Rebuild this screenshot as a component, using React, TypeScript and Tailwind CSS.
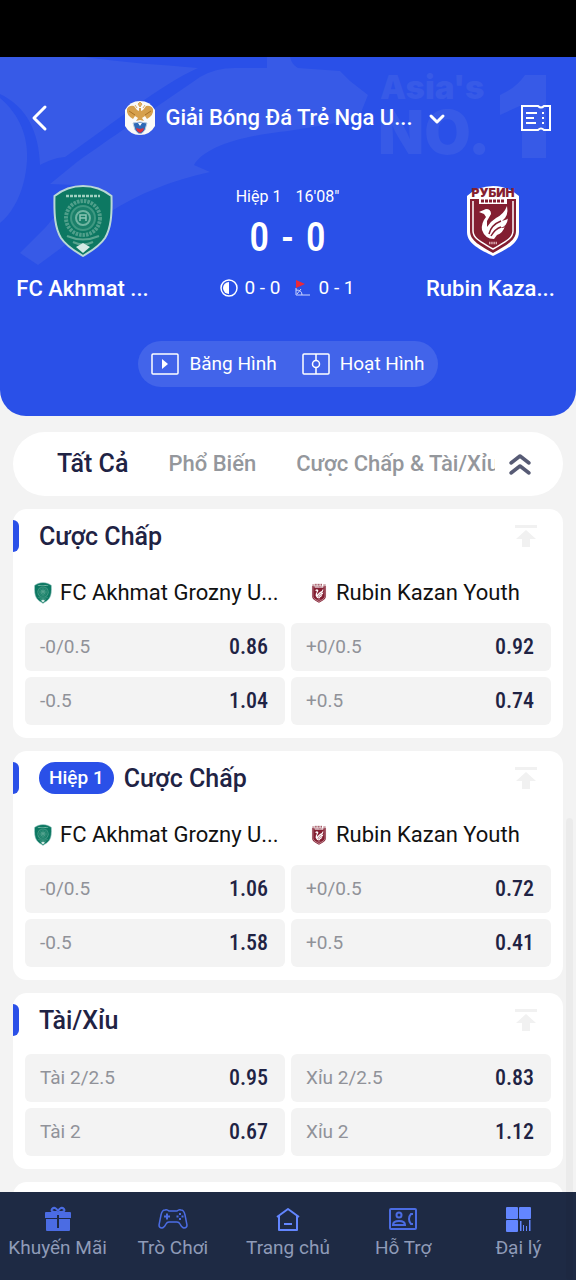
import { useState } from "react";

type Cell = { label: string; odds: string };
type Market = { id: string; title: string; period?: string; teams?: boolean; cells: Cell[] };

const markets: Market[] = [
  {
    id: "hdp",
    title: "Cược Chấp",
    teams: true,
    cells: [
      { label: "-0/0.5", odds: "0.86" },
      { label: "+0/0.5", odds: "0.92" },
      { label: "-0.5", odds: "1.04" },
      { label: "+0.5", odds: "0.74" },
    ],
  },
  {
    id: "hdp-h1",
    title: "Cược Chấp",
    period: "Hiệp 1",
    teams: true,
    cells: [
      { label: "-0/0.5", odds: "1.06" },
      { label: "+0/0.5", odds: "0.72" },
      { label: "-0.5", odds: "1.58" },
      { label: "+0.5", odds: "0.41" },
    ],
  },
  {
    id: "ou",
    title: "Tài/Xỉu",
    cells: [
      { label: "Tài 2/2.5", odds: "0.95" },
      { label: "Xỉu 2/2.5", odds: "0.83" },
      { label: "Tài 2", odds: "0.67" },
      { label: "Xỉu 2", odds: "1.12" },
    ],
  },
];

const tabs = ["Tất Cả", "Phổ Biến", "Cược Chấp & Tài/Xỉu"];

function AkhmatCrest({ className }: { className: string }) {
  return (
    <svg viewBox="0 0 60 72" className={className} aria-hidden="true">
      <path d="M30 1C20 1 9 5 1.500 11C1 30 2 43 8 53C14 62 22 66 30 71C38 66 46 62 52 53C58 43 59 30 58.500 11C51 5 40 1 30 1Z" fill="#0d7862" stroke="#b9d8d6" strokeWidth="2" />
      <path d="M13 11H47" fill="none" stroke="#9fd0c0" strokeWidth="2.500" strokeDasharray="3 1" />
      <circle cx="30" cy="33" r="17" fill="none" stroke="#4f9f8a" strokeWidth="4" strokeDasharray="2.500 1" />
      <circle cx="30" cy="33" r="12" fill="#1b806a" stroke="#3f9881" strokeWidth="2" />
      <circle cx="30" cy="33" r="7" fill="none" stroke="#6fb5a1" strokeWidth="2" />
      <path d="M27 36V30H33V36M27 33H33" fill="none" stroke="#8cc6b5" strokeWidth="1.500" />
      <path d="M14 51Q30 58 46 51M20 57Q30 62 40 57" stroke="#58a48f" strokeWidth="2" fill="none" />
      <path d="M23 62L30 58L37 62L30 68Z" fill="#d5eae5" />
    </svg>
  );
}

function RubinCrest({ className, detailed = false }: { className: string; detailed?: boolean }) {
  return (
    <svg viewBox="0 0 54 72" className={className} aria-hidden="true">
      <path d="M1 11Q12 1 27 1Q42 1 53 11V47C53 59 39 65 27 71C15 65 1 59 1 47Z" fill="#fff" />
      {detailed ? (
        <text x="27" y="12" textAnchor="middle" fontSize="12" fontWeight="900" fontFamily="Inter, sans-serif" fill="#85202f">
          РУБИН
        </text>
      ) : (
        <path d="M5 10H12M15 6V12M20 6V12M25 6V12M30 6V12M35 6V12M41 10H49" stroke="#85202f" strokeWidth="2.500" />
      )}
      <path d="M4 14H13V19H41V14H50V46C50 56 39 61 27 68C15 61 4 56 4 46Z" fill="#831e31" />
      <path d="M7 16V46C7 54 17 58 27 64C37 58 47 54 47 46V16" fill="none" stroke="#fff" strokeWidth="1.500" />
      <path d="M15 16H39" stroke="#831e31" strokeWidth="3" strokeDasharray="3 1" />
      <path d="M13 27L20 24Q25 24 25 29L21 36L21 42Q25 36 30 33Q38 29 41 21Q43 31 36 36Q43 34 42 33Q41 42 34 43Q40 43 39 41Q37 48 31 50L28 54Q19 54 16 45Q15 38 20 32L18 29Z" fill="#fff" />
      <path d="M23 49Q25 40 35 36M25 51Q29 44 35 42" stroke="#831e31" strokeWidth="1.500" fill="none" />
      <path d="M23 58h8" stroke="#d9a7ae" strokeWidth="2.500" strokeDasharray="1.500 .7" />
    </svg>
  );
}

function LeagueCrest() {
  return (
    <svg viewBox="0 0 30 34" className="h-[34px] w-[30px] shrink-0" aria-hidden="true">
      <path d="M0 9Q5 0 15 0Q25 0 30 9V25Q25 34 15 34Q5 34 0 25Z" fill="#fbfaf8" />
      <path d="M2 8Q4 4 9 5L12 9L14 10V7H16V10L18 9L21 5Q26 4 28 8Q29 14 22 18L20 15L17 17L19 20L15 19L11 20L13 17L10 15L8 18Q1 14 2 8Z" fill="#d6a04d" />
      <path d="M4 10L10 14M26 10L20 14" stroke="#a97125" strokeWidth="1" />
      <path d="M13 3L15 1L17 3L15 6ZM10 4L12 7M20 4L18 7" fill="#e3b368" stroke="#d09a45" strokeWidth="0.800" />
      <path d="M8 22Q15 20 22 22L20 29Q17 33 15 33Q13 33 10 29Z" fill="#2d68b6" stroke="#b8cbe0" />
      <path d="M11 27L15 28L19 27L18 30L15 32L12 30Z" fill="#d62f40" />
      <path d="M13 22h4l-2 3Z" fill="#fff" />
    </svg>
  );
}

function HeaderArt() {
  return (
    <svg viewBox="0 0 576 359" preserveAspectRatio="xMinYMin slice" className="pointer-events-none absolute inset-0 h-full w-full" aria-hidden="true">
      <g fill="#375ae7">
        <path d="M0 0H85C125 6 165 8 198 11C160 28 115 65 65 100C54 101 48 104 40 108C39 75 27 50 0 37Z" />
        <path d="M0 41C20 58 28 80 27 103C25 138 10 158 0 166Z" />
        <path d="M267 0H290Q292 8 298 11L340 14L350 24L368 38L360 58Q345 65 325 68L288 74C240 79 205 90 194 108L210 115C170 124 138 137 110 155L38 208L20 196L45 171Q64 150 75 128L50 127L77 105C112 80 145 58 200 20Q215 11 235 11H267Z" />
        <g fontFamily="Inter, sans-serif" fontWeight="900">
          <text x="380" y="42" fontSize="33">Asia's</text>
          <text x="378" y="97" fontSize="60">NO.</text>
        </g>
        <path d="M525 18H546V101H522V48L500 58V38Q516 31 525 18Z" />
      </g>
    </svg>
  );
}

function NavIcon({ name }: { name: string }) {
  return (
    <svg viewBox="0 0 30 26" className="h-[26px] w-[30px]" fill="none" stroke="#4b6ce3" strokeWidth="2" aria-hidden="true">
      {name === "gift" && (
        <>
          <path d="M3 6H27Q28 6 28 7V12H2V7Q2 6 3 6ZM3 13H27V24Q27 25 26 25H4Q3 25 3 24Z" fill="#4b6ce3" stroke="none" />
          <path d="M14 6Q7 6 9 3Q12 0 15 5Q18 0 21 3Q23 6 16 6" />
          <path d="M15 9V22" stroke="#1e2a44" />
        </>
      )}
      {name === "game" && (
        <>
          <path d="M7 4Q9 3 11 5H19Q21 3 23 4Q26 4 27 9L29 19Q29 22 26 22Q24 22 22 18Q21 16 19 16H11Q9 16 8 18Q6 22 4 22Q1 22 1 19L3 9Q4 4 7 4Z" strokeWidth="1.500" />
          <path d="M9 7.500V13.500M6 10.500H12" />
          <path d="M22 7v2M22 12v2M18.500 10.500h2M23.500 10.500h2" />
        </>
      )}
      {name === "home" && (
        <g stroke="#6386ff">
          <path d="M4 11L15 3L26 11M6 10V24H24V10" strokeLinejoin="round" />
          <path d="M11 18H19" />
        </g>
      )}
      {name === "contact" && (
        <>
          <rect x="2" y="3" width="26" height="20" rx="1" />
          <circle cx="11" cy="9" r="2.500" />
          <path d="M5 19Q5 15 11 15Q17 15 17 19Z" />
          <path d="M25 8H23Q21 10 21 13Q21 16 23 18H25" />
        </>
      )}
      {name === "agent" && (
        <g fill="#6386ff" stroke="none">
          <rect x="3" y="1" width="12" height="12" rx="1" />
          <rect x="16" y="1" width="12" height="12" rx="1" />
          <rect x="3" y="14" width="12" height="12" rx="1" />
          <path d="M17 15h1.500v10h-1.500ZM20 19h1v6h-1ZM23 20h1v5h-1ZM26 14h1.500v11h-1.500Z" />
        </g>
      )}
    </svg>
  );
}

const navItems = [
  { label: "Khuyến Mãi", icon: "gift" },
  { label: "Trò Chơi", icon: "game" },
  { label: "Trang chủ", icon: "home" },
  { label: "Hỗ Trợ", icon: "contact" },
  { label: "Đại lý", icon: "agent" },
];

function MatchHeader() {
  return (
    <header className="relative overflow-hidden rounded-b-[26px] bg-[#2a50e8] pb-[29px] text-white">
      <HeaderArt />
      <div className="relative flex h-[122px] items-center justify-between px-[25px]">
        <button type="button" aria-label="Quay lại" className="flex w-[26px] justify-start">
          <svg viewBox="0 0 26 32" className="h-8 w-[26px]" fill="none" stroke="#fff" strokeWidth="3" strokeLinecap="round" strokeLinejoin="round">
            <path d="M20 5L9 16L20 27" />
          </svg>
        </button>
        <button type="button" className="flex min-w-0 items-center gap-[10px]">
          <LeagueCrest />
          <span className="truncate text-[22px] font-medium leading-8">Giải Bóng Đá Trẻ Nga U...</span>
          <svg viewBox="0 0 20 20" className="ml-1 h-5 w-5" fill="none" stroke="#fff" strokeWidth="3" strokeLinecap="round" strokeLinejoin="round" aria-hidden="true">
            <path d="M4 8L10 14L16 8" />
          </svg>
        </button>
        <button type="button" aria-label="Phiếu cược">
          <svg viewBox="0 0 30 26" className="h-[26px] w-[30px]" fill="none" stroke="#fff" strokeWidth="2" aria-hidden="true">
            <path d="M1 1H17Q20 4 23 1H29V25H23Q20 22 17 25H1Z" />
            <path d="M5 8H16M5 13H13M5 18H15" />
            <path d="M22 7v2M22 12v2M22 17v2" />
          </svg>
        </button>
      </div>

      <div className="relative flex items-start justify-between px-4">
        <div className="flex w-[133px] flex-col items-center pt-[6px]">
          <AkhmatCrest className="h-[72px] w-[60px]" />
          <span className="mt-4 whitespace-nowrap text-[22px] font-medium leading-8">FC Akhmat ...</span>
        </div>
        <div className="flex flex-col items-center pt-[6px]">
          <p className="flex gap-[14px] text-[16px] leading-6">
            <span>Hiệp 1</span>
            <span>16'08"</span>
          </p>
          <p className="mt-[6px] flex gap-3 font-['Roboto_Condensed','Roboto',sans-serif] text-[40px] font-medium leading-[46px]">
            <span>0</span>
            <span>-</span>
            <span>0</span>
          </p>
          <p className="mt-[15px] flex items-center text-[19px] leading-6">
            <svg viewBox="0 0 18 18" className="mr-[6px] h-[18px] w-[18px]" aria-hidden="true">
              <circle cx="9" cy="9" r="8" fill="none" stroke="#fff" strokeWidth="1.500" />
              <path d="M9 3A6 6 0 0 0 9 15Z" fill="#fff" />
            </svg>
            <span>0 - 0</span>
            <svg viewBox="0 0 16 18" className="ml-[14px] mr-2 h-[18px] w-4" aria-hidden="true">
              <path d="M1 1L10 5L1 9Z" fill="#ed2838" />
              <path d="M1 9V16H15M1 11Q7 11 7 16M2 15L6 10" fill="none" stroke="#cbd5ff" strokeWidth="1" />
            </svg>
            <span>0 - 1</span>
          </p>
        </div>
        <div className="flex w-[134px] flex-col items-center pt-[6px]">
          <RubinCrest detailed className="h-[72px] w-[54px]" />
          <span className="mt-4 self-start whitespace-nowrap text-[22px] font-medium leading-8">Rubin Kaza...</span>
        </div>
      </div>

      <div className="relative mt-9 flex justify-center">
        <div className="flex h-[46px] items-center gap-[25px] rounded-full bg-[#4264ea] px-[13px] text-[19px] leading-6">
          <button type="button" className="flex items-center gap-[10px]">
            <svg viewBox="0 0 28 22" className="h-[22px] w-7" fill="none" stroke="#fff" strokeWidth="1.500" aria-hidden="true">
              <rect x="1" y="1" width="26" height="20" rx="1" />
              <path d="M11 6L17 11L11 16Z" fill="#fff" stroke="none" />
            </svg>
            Băng Hình
          </button>
          <button type="button" className="flex items-center gap-[10px]">
            <svg viewBox="0 0 28 22" className="h-[22px] w-7" fill="none" stroke="#fff" strokeWidth="1.500" aria-hidden="true">
              <rect x="1" y="1" width="26" height="20" rx="1" />
              <circle cx="14" cy="11" r="3.500" />
              <path d="M14 1V7M14 15V21" />
            </svg>
            Hoạt Hình
          </button>
        </div>
      </div>
    </header>
  );
}

function MarketCard({ market }: { market: Market }) {
  return (
    <section className="rounded-[14px] bg-white pb-[13px]">
      <div className="flex h-[54px] items-center pr-[25px]">
        <span className="h-8 w-[6px] rounded-r-md bg-[#2a50e8]" />
        <div className="ml-5 flex flex-1 items-center gap-[10px]">
          {market.period && (
            <span className="h-8 rounded-full bg-[#2a50e8] px-[10px] text-[19px] font-medium leading-8 text-white">{market.period}</span>
          )}
          <h2 className="pt-[2px] text-[25px] font-medium leading-8 text-[#1f2344]">{market.title}</h2>
        </div>
        <button type="button" aria-label="Ghim lên đầu">
          <svg viewBox="0 0 24 24" className="h-6 w-6" fill="#f1f1f1" aria-hidden="true">
            <path d="M1 1H23V4H1ZM12 6L22 15H16V23H8V15H2Z" />
          </svg>
        </button>
      </div>
      {market.teams ? (
        <div className="grid h-[60px] grid-cols-2 items-center gap-[6px] px-[13px] text-[22px] leading-8 text-[#111]">
          <p className="flex min-w-0 items-center gap-2 whitespace-nowrap pl-2">
            <AkhmatCrest className="h-[22px] w-[18px] shrink-0" />
            FC Akhmat Grozny U...
          </p>
          <p className="flex min-w-0 items-center gap-2 whitespace-nowrap pl-[19px]">
            <RubinCrest className="h-[22px] w-[18px] shrink-0" />
            Rubin Kazan Youth
          </p>
        </div>
      ) : (
        <div className="h-[7px]" />
      )}
      <div className="grid grid-cols-2 gap-[6px] px-[12px]">
        {market.cells.map((c) => (
          <button key={c.label} type="button" className="flex h-12 items-center justify-between rounded-md bg-[#f3f3f3] pl-[15px] pr-[17px]">
            <span className="text-[19px] leading-6 text-[#909299]">{c.label}</span>
            <span className="font-['Roboto_Condensed','Roboto',sans-serif] text-[22px] font-medium leading-6 text-[#1f2344]">{c.odds}</span>
          </button>
        ))}
      </div>
    </section>
  );
}

export default function App() {
  const [active, setActive] = useState(0);
  return (
    <div className="relative flex h-screen flex-col overflow-hidden bg-[#f3f3f3] font-['Roboto',sans-serif]">
      <div className="h-[57px] shrink-0 bg-black" />
      <div className="min-h-0 flex-1 overflow-y-auto [scrollbar-width:none]">
        <MatchHeader />
        <main className="flex flex-col gap-[13px] px-[13px] pt-4">
          <div className="flex h-16 items-center rounded-full bg-white pl-11 pr-[30px]">
            <div className="flex min-w-0 flex-1 items-center gap-10 overflow-hidden whitespace-nowrap">
              {tabs.map((t, i) => (
                <button
                  key={t}
                  type="button"
                  onClick={() => setActive(i)}
                  className={i === active ? "shrink-0 text-[25px] font-medium leading-8 text-[#1f2344]" : "shrink-0 text-[22px] font-medium leading-8 text-[#94979c]"}
                >
                  {t}
                </button>
              ))}
            </div>
            <button type="button" aria-label="Thu gọn" className="ml-3">
              <svg viewBox="0 0 26 26" className="h-[26px] w-[26px]" fill="none" stroke="#575b75" strokeWidth="3.500" strokeLinecap="round" strokeLinejoin="round" aria-hidden="true">
                <path d="M4 12L13 5L22 12M4 22L13 15L22 22" />
              </svg>
            </button>
          </div>
          {markets.map((m) => (
            <MarketCard key={m.id} market={m} />
          ))}
          <div className="h-12 rounded-[14px] bg-white" />
        </main>
      </div>
      <nav className="grid h-[88px] shrink-0 grid-cols-5 bg-[#1e2a44]">
        {navItems.map((n) => (
          <a key={n.label} href="#" className="flex flex-col items-center gap-1 whitespace-nowrap pt-[14px] text-[19px] leading-6 text-[#8f9bb8]">
            <NavIcon name={n.icon} />
            {n.label}
          </a>
        ))}
      </nav>
      <div className="pointer-events-none absolute bottom-0 right-[3px] top-[818px] w-[7px] rounded-full bg-black/3" />
    </div>
  );
}
